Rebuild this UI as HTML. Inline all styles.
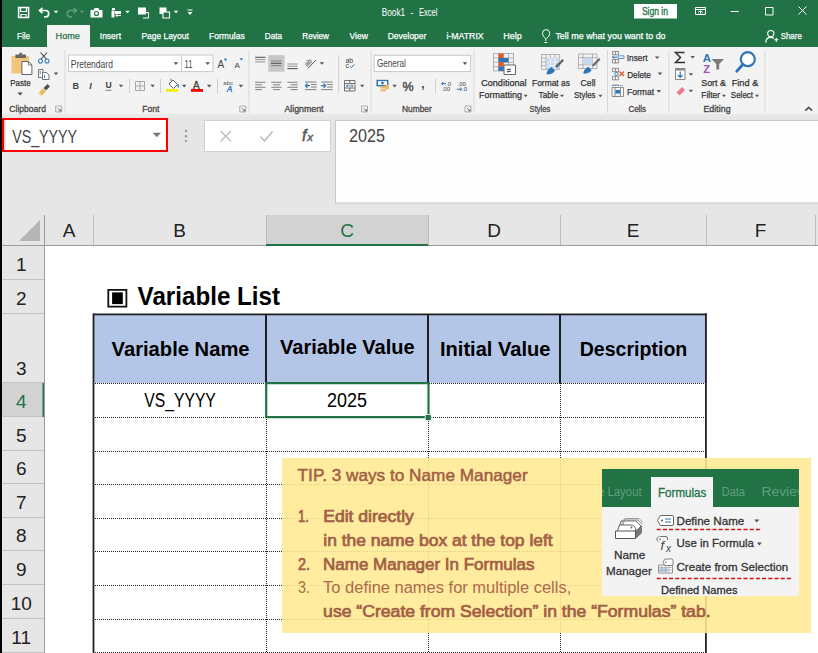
<!DOCTYPE html>
<html><head><meta charset="utf-8">
<style>
*{margin:0;padding:0}
html,body{width:818px;height:653px;overflow:hidden;background:#fff}
svg text{font-family:"Liberation Sans",sans-serif}
</style></head><body>
<svg width="818" height="653" viewBox="0 0 818 653" style="position:absolute;left:0;top:0;display:block">
<rect x="0" y="0" width="818" height="47" fill="#217346"/>
<rect x="47" y="25" width="43" height="22" fill="#f3f3f3"/>
<path d="M18.6,7.6 h10 v10 h-10 Z" fill="none" stroke="#ffffff" stroke-width="1.5"/>
<path d="M20.5,8 v3.5 h6 v-3.5" fill="none" stroke="#ffffff" stroke-width="1.2"/>
<path d="M21,17.5 v-3 h5 v3" fill="none" stroke="#ffffff" stroke-width="1.2"/>
<path d="M42.5,7.8 l-3,2.7 l3,2.7 M39.7,10.5 h5.8 a3.2,3.2 0 0 1 0,6.4 h-1.5" fill="none" stroke="#ffffff" stroke-width="1.6"/>
<path d="M53.75,10.75 L58.25,10.75 L56,13.25 Z" fill="#ffffff" stroke="none" stroke-width="1"/>
<path d="M73.5,7.8 l3,2.7 l-3,2.7 M76.3,10.5 h-5.8 a3.2,3.2 0 0 0 0,6.4 h1.5" fill="none" stroke="#5c9a78" stroke-width="1.6"/>
<path d="M79.75,10.75 L84.25,10.75 L82,13.25 Z" fill="#5c9a78" stroke="none" stroke-width="1"/>
<path d="M90.5,10 h3 l1.2,-2 h3.6 l1.2,2 h3 v7.5 h-12 Z" fill="#ffffff" stroke="none" stroke-width="1"/>
<circle cx="96.5" cy="13.5" r="2.6" fill="#217346"/><circle cx="96.5" cy="13.5" r="1.4" fill="#fff"/>
<path d="M112,8 h3 v2 h-3 Z M111.5,10.5 h3 v7 h-3 Z" fill="#ffffff" stroke="none" stroke-width="1"/>
<path d="M115,11 h6 v3 h-6 Z" fill="#ffffff" stroke="none" stroke-width="1"/>
<path d="M121,15.5 h-5 l1.5,-1.5 M116,15.5 l1.5,1.5" fill="none" stroke="#ffffff" stroke-width="1"/>
<path d="M125.25,10.75 L129.75,10.75 L127.5,13.25 Z" fill="#ffffff" stroke="none" stroke-width="1"/>
<rect x="138" y="7.5" width="8" height="7" fill="#ffffff"/>
<path d="M143,12.5 h5.5 v5.5 h-5.5" fill="none" stroke="#ffffff" stroke-width="1"/>
<rect x="159.5" y="7.5" width="7" height="6.5" fill="#ffffff"/>
<path d="M163,12 h6.5 v6 h-6.5 Z" fill="#217346" stroke="#ffffff" stroke-width="1.1"/>
<path d="M173.75,10.75 L178.25,10.75 L176,13.25 Z" fill="#ffffff" stroke="none" stroke-width="1"/>
<line x1="187.5" y1="10" x2="192.5" y2="10" stroke="#ffffff" stroke-width="1"/>
<path d="M187.5,12.0 L192.5,12.0 L190,15.0 Z" fill="#ffffff" stroke="none" stroke-width="1"/>
<text x="381.70" y="15.60" font-size="10" fill="#ffffff" textLength="23.50" lengthAdjust="spacingAndGlyphs">Book1</text>
<text x="410.60" y="15.60" font-size="10" fill="#ffffff" textLength="2.88" lengthAdjust="spacingAndGlyphs">-</text>
<text x="418.90" y="15.60" font-size="10" fill="#ffffff" textLength="18.60" lengthAdjust="spacingAndGlyphs">Excel</text>
<rect x="634" y="4" width="43" height="14.5" fill="#ffffff"/>
<text x="641.90" y="15.00" font-size="10" fill="#217346" stroke="#217346" stroke-width="0.3" textLength="26.08" lengthAdjust="spacingAndGlyphs">Sign in</text>
<path d="M695.5,7.5 h10 v7 h-10 Z M695.5,9.5 h10" fill="none" stroke="#ffffff" stroke-width="1"/>
<path d="M698,12.5 l2.5,-1.8 l2.5,1.8 M700.5,11 v3" fill="none" stroke="#ffffff" stroke-width="0.9"/>
<line x1="730.8" y1="11.5" x2="738.8" y2="11.5" stroke="#ffffff" stroke-width="1"/>
<path d="M765.5,7.5 h7.5 v7.5 h-7.5 Z" fill="none" stroke="#ffffff" stroke-width="1"/>
<path d="M798.5,6.5 L806.5,14.5 M806.5,6.5 L798.5,14.5" fill="none" stroke="#ffffff" stroke-width="1"/>
<text x="17.10" y="39.10" font-size="9.9" fill="#ffffff" stroke="#ffffff" stroke-width="0.25" textLength="12.91" lengthAdjust="spacingAndGlyphs">File</text>
<text x="55.60" y="39.10" font-size="9.9" fill="#217346" stroke="#217346" stroke-width="0.25" textLength="24.28" lengthAdjust="spacingAndGlyphs">Home</text>
<text x="99.80" y="39.10" font-size="9.9" fill="#ffffff" stroke="#ffffff" stroke-width="0.25" textLength="21.21" lengthAdjust="spacingAndGlyphs">Insert</text>
<text x="141.40" y="39.10" font-size="9.9" fill="#ffffff" stroke="#ffffff" stroke-width="0.25" textLength="47.41" lengthAdjust="spacingAndGlyphs">Page Layout</text>
<text x="209.00" y="39.10" font-size="9.9" fill="#ffffff" stroke="#ffffff" stroke-width="0.25" textLength="35.68" lengthAdjust="spacingAndGlyphs">Formulas</text>
<text x="264.70" y="39.10" font-size="9.9" fill="#ffffff" stroke="#ffffff" stroke-width="0.25" textLength="17.38" lengthAdjust="spacingAndGlyphs">Data</text>
<text x="302.30" y="39.10" font-size="9.9" fill="#ffffff" stroke="#ffffff" stroke-width="0.25" textLength="26.69" lengthAdjust="spacingAndGlyphs">Review</text>
<text x="349.60" y="39.10" font-size="9.9" fill="#ffffff" stroke="#ffffff" stroke-width="0.25" textLength="18.20" lengthAdjust="spacingAndGlyphs">View</text>
<text x="387.70" y="39.10" font-size="9.9" fill="#ffffff" stroke="#ffffff" stroke-width="0.25" textLength="38.69" lengthAdjust="spacingAndGlyphs">Developer</text>
<text x="446.40" y="39.10" font-size="9.9" fill="#ffffff" stroke="#ffffff" stroke-width="0.25" textLength="37.29" lengthAdjust="spacingAndGlyphs">i-MATRIX</text>
<text x="503.30" y="39.10" font-size="9.9" fill="#ffffff" stroke="#ffffff" stroke-width="0.25" textLength="18.52" lengthAdjust="spacingAndGlyphs">Help</text>
<path d="M545.8,41 v-2.5 c-2,-1.3 -3.3,-3 -3.3,-5.3 a3.6,3.6 0 0 1 7.2,0 c0,2.3 -1.3,4 -3.3,5.3" fill="none" stroke="#ffffff" stroke-width="1"/>
<line x1="544.3" y1="42.5" x2="547.3" y2="42.5" stroke="#ffffff" stroke-width="1"/>
<text x="555.40" y="39.10" font-size="9.9" fill="#ffffff" stroke="#ffffff" stroke-width="0.25" textLength="110.20" lengthAdjust="spacingAndGlyphs">Tell me what you want to do</text>
<circle cx="770.8" cy="33.6" r="3.1" fill="none" stroke="#fff" stroke-width="1.1"/>
<path d="M765.8,42.8 c0,-3.6 2.3,-5.4 5,-5.4 c1.2,0 2.2,0.3 3,0.9" fill="none" stroke="#ffffff" stroke-width="1.1"/>
<path d="M774.2,39.8 h4.2 M776.3,37.7 v4.2" fill="none" stroke="#ffffff" stroke-width="1.1"/>
<text x="780.70" y="39.10" font-size="9.9" fill="#ffffff" stroke="#ffffff" stroke-width="0.25" textLength="21.09" lengthAdjust="spacingAndGlyphs">Share</text>
<rect x="0" y="47" width="818" height="67" fill="#f3f3f3"/>
<rect x="0" y="114.3" width="818" height="1.2" fill="#dadada"/>
<line x1="65" y1="50" x2="65" y2="113" stroke="#d9d9d9" stroke-width="1"/>
<line x1="249" y1="50" x2="249" y2="113" stroke="#d9d9d9" stroke-width="1"/>
<line x1="371" y1="50" x2="371" y2="113" stroke="#d9d9d9" stroke-width="1"/>
<line x1="474" y1="50" x2="474" y2="113" stroke="#d9d9d9" stroke-width="1"/>
<line x1="607.5" y1="50" x2="607.5" y2="113" stroke="#d9d9d9" stroke-width="1"/>
<line x1="668.8" y1="50" x2="668.8" y2="113" stroke="#d9d9d9" stroke-width="1"/>
<line x1="765" y1="50" x2="765" y2="113" stroke="#d9d9d9" stroke-width="1"/>
<text x="9.30" y="112.00" font-size="9.2" fill="#444" stroke="#444" stroke-width="0.3" textLength="36.70" lengthAdjust="spacingAndGlyphs">Clipboard</text>
<text x="142.30" y="112.00" font-size="9.2" fill="#444" stroke="#444" stroke-width="0.3" textLength="17.11" lengthAdjust="spacingAndGlyphs">Font</text>
<text x="284.40" y="112.00" font-size="9.2" fill="#444" stroke="#444" stroke-width="0.3" textLength="39.12" lengthAdjust="spacingAndGlyphs">Alignment</text>
<text x="402.00" y="112.00" font-size="9.2" fill="#444" stroke="#444" stroke-width="0.3" textLength="29.82" lengthAdjust="spacingAndGlyphs">Number</text>
<text x="529.60" y="112.00" font-size="9.2" fill="#444" stroke="#444" stroke-width="0.3" textLength="20.79" lengthAdjust="spacingAndGlyphs">Styles</text>
<text x="628.50" y="112.00" font-size="9.2" fill="#444" stroke="#444" stroke-width="0.3" textLength="17.58" lengthAdjust="spacingAndGlyphs">Cells</text>
<text x="703.40" y="112.00" font-size="9.2" fill="#444" stroke="#444" stroke-width="0.3" textLength="27.18" lengthAdjust="spacingAndGlyphs">Editing</text>
<path d="M55.7,106 h6 v6 h-6 Z" fill="none" stroke="#999" stroke-width="0.8"/>
<path d="M57.7,108 l3,3 M60.7,109 v2 h-2" fill="none" stroke="#666" stroke-width="0.8"/>
<path d="M239.8,106 h6 v6 h-6 Z" fill="none" stroke="#999" stroke-width="0.8"/>
<path d="M241.8,108 l3,3 M244.8,109 v2 h-2" fill="none" stroke="#666" stroke-width="0.8"/>
<path d="M361.5,106 h6 v6 h-6 Z" fill="none" stroke="#999" stroke-width="0.8"/>
<path d="M363.5,108 l3,3 M366.5,109 v2 h-2" fill="none" stroke="#666" stroke-width="0.8"/>
<path d="M465,106 h6 v6 h-6 Z" fill="none" stroke="#999" stroke-width="0.8"/>
<path d="M467,108 l3,3 M470,109 v2 h-2" fill="none" stroke="#666" stroke-width="0.8"/>
<path d="M805.3,110.6 l3.4,-3.2 l3.4,3.2" fill="none" stroke="#555" stroke-width="1.8"/>
<text x="10.30" y="85.90" font-size="9.6" fill="#333" stroke="#333" stroke-width="0.25" textLength="20.32" lengthAdjust="spacingAndGlyphs">Paste</text>
<path d="M17.6,92.5 L22.6,92.5 L20.1,95.5 Z" fill="#444" stroke="none" stroke-width="1"/>
<text x="481.30" y="86.00" font-size="9.4" fill="#333" stroke="#333" stroke-width="0.25" textLength="45.19" lengthAdjust="spacingAndGlyphs">Conditional</text>
<text x="479.10" y="97.60" font-size="9.4" fill="#333" stroke="#333" stroke-width="0.25" textLength="42.90" lengthAdjust="spacingAndGlyphs">Formatting</text>
<path d="M523.7,94.8 L527.7,94.8 L525.7,97.2 Z" fill="#555" stroke="none" stroke-width="1"/>
<text x="532.00" y="86.00" font-size="9.4" fill="#333" stroke="#333" stroke-width="0.25" textLength="37.91" lengthAdjust="spacingAndGlyphs">Format as</text>
<text x="538.50" y="97.60" font-size="9.4" fill="#333" stroke="#333" stroke-width="0.25" textLength="19.81" lengthAdjust="spacingAndGlyphs">Table</text>
<path d="M560.0,94.8 L564.0,94.8 L562,97.2 Z" fill="#555" stroke="none" stroke-width="1"/>
<text x="580.60" y="86.00" font-size="9.4" fill="#333" stroke="#333" stroke-width="0.25" textLength="14.88" lengthAdjust="spacingAndGlyphs">Cell</text>
<text x="574.00" y="97.60" font-size="9.4" fill="#333" stroke="#333" stroke-width="0.25" textLength="21.49" lengthAdjust="spacingAndGlyphs">Styles</text>
<path d="M598.4,94.8 L602.4,94.8 L600.4,97.2 Z" fill="#555" stroke="none" stroke-width="1"/>
<text x="626.70" y="60.70" font-size="9.4" fill="#333" stroke="#333" stroke-width="0.25" textLength="20.91" lengthAdjust="spacingAndGlyphs">Insert</text>
<path d="M654.95,56.400000000000006 L659.45,56.400000000000006 L657.2,59.0 Z" fill="#555" stroke="none" stroke-width="1"/>
<text x="627.20" y="77.60" font-size="9.4" fill="#333" stroke="#333" stroke-width="0.25" textLength="23.61" lengthAdjust="spacingAndGlyphs">Delete</text>
<path d="M657.75,72.60000000000001 L662.25,72.60000000000001 L660,75.2 Z" fill="#555" stroke="none" stroke-width="1"/>
<text x="627.00" y="94.60" font-size="9.4" fill="#333" stroke="#333" stroke-width="0.25" textLength="27.02" lengthAdjust="spacingAndGlyphs">Format</text>
<path d="M656.55,90.10000000000001 L661.05,90.10000000000001 L658.8,92.7 Z" fill="#555" stroke="none" stroke-width="1"/>
<text x="701.20" y="85.70" font-size="9.4" fill="#333" stroke="#333" stroke-width="0.25" textLength="24.79" lengthAdjust="spacingAndGlyphs">Sort &amp;</text>
<text x="701.20" y="97.70" font-size="9.4" fill="#333" stroke="#333" stroke-width="0.25" textLength="18.92" lengthAdjust="spacingAndGlyphs">Filter</text>
<path d="M722.0,94.8 L726.0,94.8 L724,97.2 Z" fill="#555" stroke="none" stroke-width="1"/>
<text x="731.70" y="85.70" font-size="9.4" fill="#333" stroke="#333" stroke-width="0.25" textLength="26.60" lengthAdjust="spacingAndGlyphs">Find &amp;</text>
<text x="730.80" y="97.70" font-size="9.4" fill="#333" stroke="#333" stroke-width="0.25" textLength="22.29" lengthAdjust="spacingAndGlyphs">Select</text>
<path d="M755.0,94.8 L759.0,94.8 L757,97.2 Z" fill="#555" stroke="none" stroke-width="1"/>
<rect x="68.5" y="55" width="144.5" height="16.6" fill="#fff" stroke="#c8c8c8" stroke-width="1"/>
<line x1="181.6" y1="55" x2="181.6" y2="71.6" stroke="#c8c8c8" stroke-width="1"/>
<text x="70.80" y="67.50" font-size="10.5" fill="#444" textLength="42.08" lengthAdjust="spacingAndGlyphs">Pretendard</text>
<path d="M173.65,62.300000000000004 L178.15,62.300000000000004 L175.9,64.9 Z" fill="#555" stroke="none" stroke-width="1"/>
<text x="184.50" y="67.50" font-size="10.5" fill="#444" textLength="7.99" lengthAdjust="spacingAndGlyphs">11</text>
<path d="M205.45,62.300000000000004 L209.95,62.300000000000004 L207.7,64.9 Z" fill="#555" stroke="none" stroke-width="1"/>
<rect x="374.2" y="55.3" width="96.4" height="16.3" fill="#fff" stroke="#c8c8c8" stroke-width="1"/>
<text x="377.00" y="66.70" font-size="10.5" fill="#444" textLength="28.78" lengthAdjust="spacingAndGlyphs">General</text>
<path d="M462.75,62.300000000000004 L467.25,62.300000000000004 L465,64.9 Z" fill="#555" stroke="none" stroke-width="1"/>
<path d="M11.5,56 h17.4 v17.5 h-17.4 Z" fill="#f0c77a" stroke="none" stroke-width="1"/>
<path d="M15.4,54.5 h10.5 v3.5 h-10.5 Z" fill="#666" stroke="none" stroke-width="1"/>
<path d="M19,54.5 a1.7,1.7 0 0 1 3.4,0 Z" fill="#666" stroke="none" stroke-width="1"/>
<rect x="19.7" y="52.8" width="2" height="2" fill="#666"/>
<path d="M21.9,61.5 h6.5 l3.5,3.5 v9.5 h-10 Z" fill="#fff" stroke="#555" stroke-width="0.9"/>
<path d="M28.4,61.5 v3.5 h3.5" fill="none" stroke="#555" stroke-width="0.8"/>
<path d="M40.5,52.5 L46.8,59.5 M47,52.5 L40.7,59.5" fill="none" stroke="#444" stroke-width="1.1"/>
<circle cx="40.5" cy="61" r="2" fill="none" stroke="#3c7fc4" stroke-width="1.1"/>
<circle cx="47" cy="61" r="2" fill="none" stroke="#3c7fc4" stroke-width="1.1"/>
<path d="M38.5,69.5 h4.5 v8 h-4.5 Z" fill="#fff" stroke="#666" stroke-width="0.9"/>
<path d="M42.5,72.5 h4 l2.5,2.5 v4.5 h-6.5 Z" fill="#fff" stroke="#666" stroke-width="0.9"/>
<rect x="44" y="75" width="1" height="3" fill="#3c7fc4"/>
<rect x="39.7" y="71" width="1" height="3" fill="#3c7fc4"/>
<path d="M53.75,72.60000000000001 L58.25,72.60000000000001 L56,75.2 Z" fill="#555" stroke="none" stroke-width="1"/>
<path d="M39,92.5 l4,-4 l3,3 l-4,4 Z" fill="#ecb95c" stroke="none" stroke-width="1"/>
<path d="M43.5,88 l4,-4 l2.5,2.5 l-4,4 Z" fill="#555" stroke="none" stroke-width="1"/>
<path d="M38.2,93.2 l3.3,3 l-1,-2 Z" fill="#ecb95c" stroke="none" stroke-width="1"/>
<text x="72.5" y="88.7" font-size="9" font-weight="bold" fill="#444">B</text>
<text x="89.2" y="88.7" font-size="9" font-style="italic" font-family="Liberation Serif" font-weight="bold" fill="#444">I</text>
<text x="105.4" y="88.2" font-size="8.6" font-weight="bold" fill="#444">U</text>
<line x1="105.4" y1="90.3" x2="111.5" y2="90.3" stroke="#666" stroke-width="0.8"/>
<path d="M118.75,84.7 L123.25,84.7 L121,87.3 Z" fill="#555" stroke="none" stroke-width="1"/>
<line x1="129.5" y1="79" x2="129.5" y2="93.5" stroke="#cfcfcf" stroke-width="1"/>
<path d="M135.5,81.5 h9 v9 h-9 Z M140,81.5 v9 M135.5,86 h9" fill="none" stroke="#a8a8a8" stroke-width="1"/>
<path d="M150.35,84.7 L154.85,84.7 L152.6,87.3 Z" fill="#555" stroke="none" stroke-width="1"/>
<line x1="160.5" y1="79" x2="160.5" y2="93.5" stroke="#cfcfcf" stroke-width="1"/>
<path d="M169,84 l4,-4 l4.5,4.5 l-4,4 Z" fill="#fff" stroke="#555" stroke-width="0.9"/>
<path d="M171,81 v-2.5" fill="none" stroke="#555" stroke-width="0.8"/>
<path d="M177.5,84.5 c1,1 1.2,2 0.5,3" fill="none" stroke="#2e75b6" stroke-width="1.3"/>
<rect x="166" y="89" width="12" height="2.8" fill="#f2f000"/>
<path d="M181.95,84.8 L186.45,84.8 L184.2,87.39999999999999 Z" fill="#555" stroke="none" stroke-width="1"/>
<text x="193.1" y="88.5" font-size="10" fill="#444" stroke="#444" stroke-width="0.35">A</text>
<rect x="191" y="89" width="12" height="2.8" fill="#f00"/>
<path d="M206.95,84.8 L211.45,84.8 L209.2,87.39999999999999 Z" fill="#555" stroke="none" stroke-width="1"/>
<line x1="217.5" y1="79" x2="217.5" y2="93.5" stroke="#cfcfcf" stroke-width="1"/>
<text x="223.3" y="85.2" font-size="6" fill="#555">abc</text>
<text x="226.4" y="91.8" font-size="8.5" font-weight="bold" font-style="italic" fill="#2e75b6">A</text>
<path d="M238.65,84.8 L243.15,84.8 L240.9,87.39999999999999 Z" fill="#555" stroke="none" stroke-width="1"/>
<text x="217.6" y="67.6" font-size="10" fill="#444">A</text>
<path d="M223.9,58.5 L227.1,58.5 L225.5,60.5 Z" fill="#2e75b6" stroke="none" stroke-width="1"/>
<path d="M224,60.5 l1.5,-1.5 l1.5,1.5 Z" fill="#2e75b6" stroke="none" stroke-width="1"/>
<text x="234.5" y="67.6" font-size="8" fill="#444">A</text>
<path d="M239.65,58.199999999999996 L243.15,58.199999999999996 L241.4,60.4 Z" fill="#2e75b6" stroke="none" stroke-width="1"/>
<line x1="255.1" y1="57.3" x2="265.4" y2="57.3" stroke="#555" stroke-width="1.1"/>
<line x1="255.1" y1="59.6" x2="265.4" y2="59.6" stroke="#9a9a9a" stroke-width="1.1"/>
<line x1="255.1" y1="61.9" x2="265.4" y2="61.9" stroke="#9a9a9a" stroke-width="1.1"/>
<line x1="287.4" y1="64" x2="297.7" y2="64" stroke="#9a9a9a" stroke-width="1.1"/>
<line x1="287.4" y1="66.3" x2="297.7" y2="66.3" stroke="#9a9a9a" stroke-width="1.1"/>
<line x1="287.4" y1="68.6" x2="297.7" y2="68.6" stroke="#555" stroke-width="1.1"/>
<rect x="268.3" y="55.1" width="16.2" height="16.6" fill="#c6c6c6"/>
<line x1="271" y1="61" x2="281.5" y2="61" stroke="#8a8a8a" stroke-width="1.1"/>
<line x1="271" y1="63.3" x2="281.5" y2="63.3" stroke="#555" stroke-width="1.1"/>
<line x1="271" y1="65.6" x2="281.5" y2="65.6" stroke="#8a8a8a" stroke-width="1.1"/>
<text x="0" y="0" font-size="7" fill="#444" transform="translate(307,67) rotate(-45)">ab</text>
<line x1="308" y1="68.3" x2="316" y2="60" stroke="#444" stroke-width="0.9"/>
<path d="M319.65,62.2 L324.15,62.2 L321.9,64.8 Z" fill="#555" stroke="none" stroke-width="1"/>
<line x1="338.7" y1="55" x2="338.7" y2="93" stroke="#d0d0d0" stroke-width="1"/>
<text x="345.4" y="62.9" font-size="7" fill="#444">ab</text>
<text x="345.4" y="68.3" font-size="7" fill="#444">c</text>
<path d="M350,66 l1.5,1.5 l3,-3" fill="none" stroke="#2e75b6" stroke-width="1"/>
<line x1="255.1" y1="82.3" x2="265.4" y2="82.3" stroke="#8a8a8a" stroke-width="1.1"/>
<line x1="255.1" y1="84.8" x2="262.1" y2="84.8" stroke="#8a8a8a" stroke-width="1.1"/>
<line x1="255.1" y1="87.3" x2="265.4" y2="87.3" stroke="#8a8a8a" stroke-width="1.1"/>
<line x1="255.1" y1="89.6" x2="262.1" y2="89.6" stroke="#8a8a8a" stroke-width="1.1"/>
<line x1="271.3" y1="82.3" x2="281.6" y2="82.3" stroke="#8a8a8a" stroke-width="1.1"/>
<line x1="272.95" y1="84.8" x2="279.95" y2="84.8" stroke="#8a8a8a" stroke-width="1.1"/>
<line x1="271.3" y1="87.3" x2="281.6" y2="87.3" stroke="#8a8a8a" stroke-width="1.1"/>
<line x1="272.95" y1="89.6" x2="279.95" y2="89.6" stroke="#8a8a8a" stroke-width="1.1"/>
<line x1="287.4" y1="82.3" x2="297.7" y2="82.3" stroke="#8a8a8a" stroke-width="1.1"/>
<line x1="290.7" y1="84.8" x2="297.7" y2="84.8" stroke="#8a8a8a" stroke-width="1.1"/>
<line x1="287.4" y1="87.3" x2="297.7" y2="87.3" stroke="#8a8a8a" stroke-width="1.1"/>
<line x1="290.7" y1="89.6" x2="297.7" y2="89.6" stroke="#8a8a8a" stroke-width="1.1"/>
<line x1="305" y1="82" x2="316.7" y2="82" stroke="#8a8a8a" stroke-width="1.1"/>
<line x1="311" y1="84.5" x2="316.7" y2="84.5" stroke="#8a8a8a" stroke-width="1.1"/>
<line x1="311" y1="87" x2="316.7" y2="87" stroke="#8a8a8a" stroke-width="1.1"/>
<line x1="305" y1="89.6" x2="316.7" y2="89.6" stroke="#8a8a8a" stroke-width="1.1"/>
<path d="M310,85.7 h-4.5 M307.5,83.5 l-2,2.2 l2,2.2" fill="none" stroke="#2e75b6" stroke-width="1.2"/>
<line x1="321.1" y1="82" x2="332.8" y2="82" stroke="#8a8a8a" stroke-width="1.1"/>
<line x1="327.1" y1="84.5" x2="332.8" y2="84.5" stroke="#8a8a8a" stroke-width="1.1"/>
<line x1="327.1" y1="87" x2="332.8" y2="87" stroke="#8a8a8a" stroke-width="1.1"/>
<line x1="321.1" y1="89.6" x2="332.8" y2="89.6" stroke="#8a8a8a" stroke-width="1.1"/>
<path d="M321.1,85.7 h4.5 M323.6,83.5 l2,2.2 l-2,2.2" fill="none" stroke="#2e75b6" stroke-width="1.2"/>
<path d="M344.5,80.5 h10.5 v10.5 h-10.5 Z M344.5,83.5 h10.5 M344.5,88 h10.5 M349.75,80.5 v3 M349.75,88 v3" fill="none" stroke="#666" stroke-width="0.9"/>
<path d="M346.5,85.8 h6.5 M348,84.5 l-1.5,1.3 l1.5,1.3 M351.5,84.5 l1.5,1.3 l-1.5,1.3" fill="none" stroke="#2e75b6" stroke-width="0.8"/>
<path d="M359.95,84.7 L364.45,84.7 L362.2,87.3 Z" fill="#555" stroke="none" stroke-width="1"/>
<path d="M376.5,79.8 h12 v6.6 h-12 Z" fill="#2e75b6" stroke="none" stroke-width="1"/>
<path d="M378,81.2 h9 v3.8 h-9 Z" fill="#fff" stroke="none" stroke-width="1"/>
<circle cx="382.5" cy="83.1" r="1.4" fill="#2e75b6"/>
<rect x="380.5" y="86.5" width="5.5" height="2" fill="#f0b85a"/>
<rect x="380.5" y="89.3" width="5.5" height="2" fill="#f0b85a"/>
<rect x="385.5" y="84.8" width="3.5" height="4.5" fill="#f0b85a"/>
<path d="M392.35,84.8 L396.85,84.8 L394.6,87.39999999999999 Z" fill="#555" stroke="none" stroke-width="1"/>
<text x="402.6" y="90.8" font-size="12.5" fill="#444" stroke="#444" stroke-width="0.4">%</text>
<text x="421.3" y="87.5" font-size="12" font-weight="bold" fill="#444">,</text>
<line x1="435.5" y1="79" x2="435.5" y2="93" stroke="#d0d0d0" stroke-width="1"/>
<text x="446" y="85.8" font-size="6" fill="#444">.0</text>
<text x="441.8" y="91.4" font-size="6" fill="#444">.00</text>
<path d="M446,83.6 h-4.5 M443.2,81.9 l-1.7,1.7 l1.7,1.7" fill="none" stroke="#2e75b6" stroke-width="1"/>
<text x="457.5" y="85.8" font-size="6" fill="#444">.00</text>
<text x="462" y="91.4" font-size="6" fill="#444">.0</text>
<path d="M456.8,89.2 h5 M460.1,87.5 l1.7,1.7 l-1.7,1.7" fill="none" stroke="#2e75b6" stroke-width="1"/>
<path d="M493.5,53.5 h20 v17.5 h-20 Z M493.5,58 h20 M493.5,62.3 h20 M493.5,66.6 h20 M498.5,53.5 v17.5 M503.5,53.5 v17.5 M508.5,53.5 v17.5" fill="none" stroke="#aaa" stroke-width="0.9"/>
<rect x="498.5" y="53.5" width="5" height="4.5" fill="#e2572b"/>
<rect x="498.5" y="58" width="10" height="4.3" fill="#2e75b6"/>
<rect x="498.5" y="62.3" width="5" height="4.3" fill="#e2572b"/>
<rect x="498.5" y="66.6" width="5" height="4.4" fill="#2e75b6"/>
<path d="M504,65 h11.5 v9.5 h-11.5 Z" fill="#fff" stroke="#555" stroke-width="0.9"/>
<text x="506.8" y="72.5" font-size="8" fill="#333">&#8800;</text>
<path d="M541.5,54.5 h18 v15 h-18 Z M541.5,58.2 h18 M541.5,62 h18 M541.5,65.7 h18 M546,54.5 v15 M550.5,54.5 v15 M555,54.5 v15" fill="none" stroke="#aaa" stroke-width="0.9"/>
<rect x="546.5" y="58.7" width="13" height="10.5" fill="#c5d9f1"/>
<path d="M546.5,58.2 h13 M546.5,62 h13 M546.5,65.7 h13 M550.5,58.5 v11 M555,58.5 v11" fill="none" stroke="#fff" stroke-width="0.7"/>
<path d="M555,66 l7.5,-7 l1.5,1.5 l-7,7.5 Z" fill="#666" stroke="none" stroke-width="1"/>
<path d="M546.5,74.5 c0,-3 2,-6 5,-7.5 l3.5,3.5 c-1.5,3 -5,4 -8.5,4 Z" fill="#2e75b6" stroke="none" stroke-width="1"/>
<path d="M578.5,54 h18.5 v14.5 h-18.5 Z M578.5,57.7 h18.5 M578.5,64.8 h18.5 M583,54 v14.5 M592.5,54 v14.5" fill="none" stroke="#aaa" stroke-width="0.9"/>
<rect x="583.5" y="58.2" width="9" height="6.2" fill="#c5d9f1"/>
<path d="M592,65 l7,-7 l1.5,1.5 l-7,7 Z" fill="#666" stroke="none" stroke-width="1"/>
<path d="M583.3,73.7 c0,-3 2,-5.5 5,-7 l3.3,3.3 c-1.5,3 -5,3.7 -8.3,3.7 Z" fill="#2e75b6" stroke="none" stroke-width="1"/>
<path d="M612.5,51.5 h6 v3.3 h-6 Z M612.5,59.5 h6 v3.5 h-6 Z M615.5,51.5 v3.3 M615.5,59.5 v3.5" fill="none" stroke="#777" stroke-width="0.8"/>
<path d="M612.5,68.3 h6 v3.3 h-6 Z M612.5,76.3 h6 v3.5 h-6 Z M615.5,68.3 v3.3 M615.5,76.3 v3.5" fill="none" stroke="#777" stroke-width="0.8"/>
<path d="M612.5,85 h6 v3.3 h-6 Z M612.5,93 h6 v3.5 h-6 Z M615.5,85 v3.3 M615.5,93 v3.5" fill="none" stroke="#777" stroke-width="0.8"/>
<path d="M618,55.8 h6 v2.7 h-6 Z" fill="none" stroke="#3c7fc4" stroke-width="0.8"/>
<path d="M617,57.2 h-4.5 M614,55.7 l-1.5,1.5 l1.5,1.5" fill="none" stroke="#2e75b6" stroke-width="1"/>
<path d="M615,72.5 h3 v2.7 h-3 Z" fill="none" stroke="#3c7fc4" stroke-width="0.8"/>
<path d="M619.5,71.5 l4.5,4.5 M624,71.5 l-4.5,4.5" fill="none" stroke="#e2572b" stroke-width="1.3"/>
<rect x="611.5" y="85.5" width="12.5" height="11" fill="#f3f3f3"/>
<path d="M612,87.5 h11.5 v9 h-11.5 Z M615,87.5 v9 M620.5,87.5 v9" fill="none" stroke="#777" stroke-width="0.8"/>
<path d="M612.5,85.5 h10.5" fill="none" stroke="#2e75b6" stroke-width="0.9" stroke-dasharray="1.5 1"/>
<rect x="615.5" y="90" width="4.5" height="3.5" fill="#2e75b6"/>
<path d="M684.5,52.5 h-9 l5,5 l-5,5 h9.5" fill="none" stroke="#333" stroke-width="1.5"/>
<path d="M690.35,56.0 L694.85,56.0 L692.6,58.599999999999994 Z" fill="#555" stroke="none" stroke-width="1"/>
<path d="M675.5,68.5 h9.5 v11 h-9.5 Z" fill="#fff" stroke="#777" stroke-width="0.9"/>
<rect x="675.5" y="68.5" width="9.5" height="2" fill="#888"/>
<path d="M680.2,71.5 v6 M677.8,75 l2.4,2.5 l2.4,-2.5" fill="none" stroke="#2e75b6" stroke-width="1.2"/>
<path d="M688.65,73.2 L693.15,73.2 L690.9,75.8 Z" fill="#555" stroke="none" stroke-width="1"/>
<path d="M676.5,92.5 l5.5,-5.5 l3,3 l-5.5,5.5 Z" fill="#e87d91" stroke="none" stroke-width="1"/>
<path d="M688.65,89.7 L693.15,89.7 L690.9,92.3 Z" fill="#555" stroke="none" stroke-width="1"/>
<text x="702.8" y="62.3" font-size="11.5" font-weight="bold" fill="#2e75b6">A</text>
<text x="703.3" y="72.7" font-size="11" font-weight="bold" fill="#9b4fc0">Z</text>
<path d="M711.5,59 h12.5 l-4.8,5 v5.5 h-2.9 v-5.5 Z" fill="#7a7a7a" stroke="none" stroke-width="1"/>
<circle cx="747.8" cy="59.2" r="7" fill="#fff" stroke="#2e75b6" stroke-width="2.2"/>
<line x1="742.8" y1="64.5" x2="736.8" y2="71.2" stroke="#2e75b6" stroke-width="2.8" stroke-linecap="round"/>
<rect x="0" y="116" width="818" height="130" fill="#e6e6e6"/>
<rect x="2" y="118" width="166" height="34" fill="#fff"/>
<rect x="4" y="120" width="1.5" height="30" fill="#d0d0d0"/>
<path d="M3,119 h164 v32 h-164 Z" fill="none" stroke="#ff0000" stroke-width="2"/>
<text x="12.20" y="143.00" font-size="18.5" fill="#444" textLength="64.78" lengthAdjust="spacingAndGlyphs">VS_YYYY</text>
<path d="M152.65,132.65 L160.95000000000002,132.65 L156.8,137.35 Z" fill="#777" stroke="none" stroke-width="1"/>
<circle cx="186" cy="131" r="1.2" fill="#999"/>
<circle cx="186" cy="136.2" r="1.2" fill="#999"/>
<circle cx="186" cy="141.1" r="1.2" fill="#999"/>
<rect x="204.5" y="120.5" width="126" height="31" fill="#fff" stroke="#d2d2d2" stroke-width="1"/>
<path d="M220.5,131 l10.5,10.5 M231,131 l-10.5,10.5" fill="none" stroke="#bdbdbd" stroke-width="1.4"/>
<path d="M260.5,136.5 l4,4.5 l8,-9.5" fill="none" stroke="#bdbdbd" stroke-width="1.6"/>
<text x="302" y="140.5" font-size="16" font-style="italic" font-family="Liberation Serif" fill="#555" stroke="#555" stroke-width="0.5">f</text>
<text x="307.3" y="140.8" font-size="11.5" font-style="italic" font-family="Liberation Serif" fill="#555" stroke="#555" stroke-width="0.4">x</text>
<rect x="335.5" y="120.5" width="490" height="82.5" fill="#fdfdfd" stroke="#c8c8c8" stroke-width="1"/>
<text x="349.10" y="142.40" font-size="18.5" fill="#444" textLength="35.89" lengthAdjust="spacingAndGlyphs">2025</text>
<rect x="0" y="245" width="45" height="408" fill="#e6e6e6"/>
<rect x="266" y="215" width="162" height="30" fill="#d2d2d2"/>
<rect x="2" y="383" width="42" height="34" fill="#d2d2d2"/>
<path d="M40,220 L40,241 L19,241 Z" fill="#b5b5b5" stroke="none" stroke-width="1"/>
<line x1="2" y1="279.5" x2="44" y2="279.5" stroke="#c3c3c3" stroke-width="1"/>
<line x1="2" y1="313.5" x2="44" y2="313.5" stroke="#c3c3c3" stroke-width="1"/>
<line x1="2" y1="382.5" x2="44" y2="382.5" stroke="#c3c3c3" stroke-width="1"/>
<line x1="2" y1="416.5" x2="44" y2="416.5" stroke="#c3c3c3" stroke-width="1"/>
<line x1="2" y1="450.5" x2="44" y2="450.5" stroke="#c3c3c3" stroke-width="1"/>
<line x1="2" y1="483.5" x2="44" y2="483.5" stroke="#c3c3c3" stroke-width="1"/>
<line x1="2" y1="517.5" x2="44" y2="517.5" stroke="#c3c3c3" stroke-width="1"/>
<line x1="2" y1="550.5" x2="44" y2="550.5" stroke="#c3c3c3" stroke-width="1"/>
<line x1="2" y1="584.5" x2="44" y2="584.5" stroke="#c3c3c3" stroke-width="1"/>
<line x1="2" y1="618.5" x2="44" y2="618.5" stroke="#c3c3c3" stroke-width="1"/>
<line x1="2" y1="652.5" x2="44" y2="652.5" stroke="#c3c3c3" stroke-width="1"/>
<text x="21.2" y="270.5" font-size="19" fill="#222" text-anchor="middle">1</text>
<text x="21.2" y="304.5" font-size="19" fill="#222" text-anchor="middle">2</text>
<text x="21.2" y="374.5" font-size="19" fill="#222" text-anchor="middle">3</text>
<text x="21.2" y="407.5" font-size="19" fill="#217346" text-anchor="middle">4</text>
<text x="21.2" y="441.5" font-size="19" fill="#222" text-anchor="middle">5</text>
<text x="21.2" y="474.5" font-size="19" fill="#222" text-anchor="middle">6</text>
<text x="21.2" y="508.5" font-size="19" fill="#222" text-anchor="middle">7</text>
<text x="21.2" y="541.5" font-size="19" fill="#222" text-anchor="middle">8</text>
<text x="21.2" y="575.5" font-size="19" fill="#222" text-anchor="middle">9</text>
<text x="21.2" y="609.5" font-size="19" fill="#222" text-anchor="middle">10</text>
<text x="21.2" y="643.5" font-size="19" fill="#222" text-anchor="middle">11</text>
<rect x="42.5" y="383" width="2" height="34" fill="#217346"/>
<line x1="93.5" y1="215" x2="93.5" y2="245" stroke="#bdbdbd" stroke-width="1"/>
<line x1="266.5" y1="215" x2="266.5" y2="245" stroke="#bdbdbd" stroke-width="1"/>
<line x1="428.5" y1="215" x2="428.5" y2="245" stroke="#bdbdbd" stroke-width="1"/>
<line x1="560.5" y1="215" x2="560.5" y2="245" stroke="#bdbdbd" stroke-width="1"/>
<line x1="706.5" y1="215" x2="706.5" y2="245" stroke="#bdbdbd" stroke-width="1"/>
<line x1="815.5" y1="215" x2="815.5" y2="245" stroke="#bdbdbd" stroke-width="1"/>
<text x="69.0" y="237" font-size="19" fill="#222" text-anchor="middle">A</text>
<text x="179.5" y="237" font-size="19" fill="#222" text-anchor="middle">B</text>
<text x="347.0" y="237" font-size="19" fill="#217346" text-anchor="middle">C</text>
<text x="494.0" y="237" font-size="19" fill="#222" text-anchor="middle">D</text>
<text x="633.0" y="237" font-size="19" fill="#222" text-anchor="middle">E</text>
<text x="760.5" y="237" font-size="19" fill="#222" text-anchor="middle">F</text>
<line x1="0" y1="245.5" x2="818" y2="245.5" stroke="#9c9c9c" stroke-width="1"/>
<line x1="44.5" y1="215" x2="44.5" y2="653" stroke="#9c9c9c" stroke-width="1"/>
<rect x="266" y="244" width="162" height="2" fill="#217346"/>
<rect x="45" y="246" width="773" height="407" fill="#fff"/>
<path d="M108.3,289.8 h18.1 v16.9 h-18.1 Z" fill="#fff" stroke="#111" stroke-width="1.8"/>
<rect x="112.1" y="292.4" width="10.7" height="11.7" fill="#000"/>
<text x="137.60" y="305.30" font-size="25" fill="#000" font-weight="bold" textLength="142.44" lengthAdjust="spacingAndGlyphs">Variable List</text>
<rect x="93" y="314" width="614" height="69" fill="#b4c6e7"/>
<line x1="93" y1="383.5" x2="706" y2="383.5" stroke="#222" stroke-width="1" stroke-dasharray="1 1"/>
<line x1="93" y1="417.5" x2="706" y2="417.5" stroke="#222" stroke-width="1" stroke-dasharray="1 1"/>
<line x1="93" y1="451.5" x2="706" y2="451.5" stroke="#222" stroke-width="1" stroke-dasharray="1 1"/>
<line x1="93" y1="484.5" x2="706" y2="484.5" stroke="#222" stroke-width="1" stroke-dasharray="1 1"/>
<line x1="93" y1="518.5" x2="706" y2="518.5" stroke="#222" stroke-width="1" stroke-dasharray="1 1"/>
<line x1="93" y1="551.5" x2="706" y2="551.5" stroke="#222" stroke-width="1" stroke-dasharray="1 1"/>
<line x1="93" y1="585.5" x2="706" y2="585.5" stroke="#222" stroke-width="1" stroke-dasharray="1 1"/>
<line x1="93" y1="619.5" x2="706" y2="619.5" stroke="#222" stroke-width="1" stroke-dasharray="1 1"/>
<line x1="93" y1="652.5" x2="706" y2="652.5" stroke="#222" stroke-width="1" stroke-dasharray="1 1"/>
<line x1="266.5" y1="383" x2="266.5" y2="653" stroke="#222" stroke-width="1" stroke-dasharray="1 1"/>
<line x1="428.5" y1="383" x2="428.5" y2="653" stroke="#222" stroke-width="1" stroke-dasharray="1 1"/>
<line x1="560.5" y1="383" x2="560.5" y2="653" stroke="#222" stroke-width="1" stroke-dasharray="1 1"/>
<rect x="93" y="313.5" width="614" height="1.8" fill="#222"/>
<rect x="265" y="314" width="2" height="69" fill="#1e1e1e"/>
<rect x="427" y="314" width="2" height="69" fill="#1e1e1e"/>
<rect x="559" y="314" width="2" height="69" fill="#1e1e1e"/>
<rect x="92.6" y="313.5" width="1.8" height="339.5" fill="#222"/>
<rect x="705" y="313.5" width="1.8" height="339.5" fill="#222"/>
<text x="111.60" y="356.20" font-size="20" fill="#000" font-weight="bold" textLength="137.95" lengthAdjust="spacingAndGlyphs">Variable Name</text>
<text x="280.00" y="354.20" font-size="20" fill="#000" font-weight="bold" textLength="134.63" lengthAdjust="spacingAndGlyphs">Variable Value</text>
<text x="440.00" y="356.20" font-size="20" fill="#000" font-weight="bold" textLength="110.44" lengthAdjust="spacingAndGlyphs">Initial Value</text>
<text x="579.70" y="356.20" font-size="20" fill="#000" font-weight="bold" textLength="107.62" lengthAdjust="spacingAndGlyphs">Description</text>
<text x="144.20" y="407.00" font-size="20" fill="#000" textLength="71.67" lengthAdjust="spacingAndGlyphs">VS_YYYY</text>
<text x="327.10" y="407.20" font-size="20" fill="#000" textLength="39.99" lengthAdjust="spacingAndGlyphs">2025</text>
<path d="M266.2,383.2 h162.3 v34 h-162.3 Z" fill="none" stroke="#217346" stroke-width="2.2"/>
<rect x="425.2" y="414.4" width="6" height="6" fill="#217346" stroke="#fff" stroke-width="0.8"/>
<rect x="282" y="458" width="529" height="175" fill="rgba(255,233,146,0.88)"/>
<text x="297.60" y="481.30" font-size="16.5" fill="#a35f45" stroke="#a35f45" stroke-width="0.5" textLength="230.03" lengthAdjust="spacingAndGlyphs">TIP. 3 ways to Name Manager</text>
<text x="298.00" y="522.30" font-size="16" fill="#a35f45" stroke="#a35f45" stroke-width="0.7" textLength="10.99" lengthAdjust="spacingAndGlyphs">1.</text>
<text x="323.30" y="522.30" font-size="16" fill="#a35f45" stroke="#a35f45" stroke-width="0.7" textLength="90.58" lengthAdjust="spacingAndGlyphs">Edit directly</text>
<text x="323.30" y="545.80" font-size="16" fill="#a35f45" stroke="#a35f45" stroke-width="0.7" textLength="229.31" lengthAdjust="spacingAndGlyphs">in the name box at the top left</text>
<text x="298.00" y="570.00" font-size="16" fill="#a35f45" stroke="#a35f45" stroke-width="0.7" textLength="11.99" lengthAdjust="spacingAndGlyphs">2.</text>
<text x="323.10" y="570.00" font-size="16" fill="#a35f45" stroke="#a35f45" stroke-width="0.7" textLength="211.39" lengthAdjust="spacingAndGlyphs">Name Manager In Formulas</text>
<text x="298.00" y="593.10" font-size="16" fill="#ad6a4c" textLength="11.99" lengthAdjust="spacingAndGlyphs">3.</text>
<text x="323.10" y="593.10" font-size="16" fill="#ad6a4c" textLength="248.16" lengthAdjust="spacingAndGlyphs">To define names for multiple cells,</text>
<text x="323.10" y="617.00" font-size="16" fill="#a35f45" stroke="#a35f45" stroke-width="0.7" textLength="387.48" lengthAdjust="spacingAndGlyphs">use “Create from Selection” in the “Formulas” tab.</text>
<rect x="602" y="469" width="197" height="127" fill="#f3f3f3"/>
<rect x="602" y="469" width="197" height="38" fill="#217346"/>
<rect x="651" y="477" width="62" height="30" fill="#f3f3f3"/>
<svg x="602" y="469" width="197" height="127" overflow="hidden">
<text x="-4.00" y="27.00" font-size="12" fill="#5f9f7a" textLength="43.62" lengthAdjust="spacingAndGlyphs">e Layout</text>
<text x="56.00" y="27.50" font-size="12" fill="#217346" stroke="#217346" stroke-width="0.3" textLength="48.37" lengthAdjust="spacingAndGlyphs">Formulas</text>
<text x="119.80" y="27.00" font-size="12" fill="#5f9f7a" textLength="23.17" lengthAdjust="spacingAndGlyphs">Data</text>
<text x="159.40" y="27.00" font-size="12" fill="#5f9f7a" textLength="45.58" lengthAdjust="spacingAndGlyphs">Review</text>
</svg>
<text x="676.50" y="525.40" font-size="11.8" fill="#333" stroke="#333" stroke-width="0.3" textLength="67.81" lengthAdjust="spacingAndGlyphs">Define Name</text>
<text x="676.50" y="547.40" font-size="11.8" fill="#333" stroke="#333" stroke-width="0.3" textLength="77.44" lengthAdjust="spacingAndGlyphs">Use in Formula</text>
<text x="676.50" y="570.60" font-size="11.8" fill="#333" stroke="#333" stroke-width="0.3" textLength="111.81" lengthAdjust="spacingAndGlyphs">Create from Selection</text>
<text x="613.90" y="559.30" font-size="11.8" fill="#333" stroke="#333" stroke-width="0.3" textLength="31.37" lengthAdjust="spacingAndGlyphs">Name</text>
<text x="606.00" y="575.00" font-size="11.8" fill="#333" stroke="#333" stroke-width="0.3" textLength="45.82" lengthAdjust="spacingAndGlyphs">Manager</text>
<text x="661.00" y="594.00" font-size="10.5" fill="#333" stroke="#333" stroke-width="0.3" textLength="76.43" lengthAdjust="spacingAndGlyphs">Defined Names</text>
<path d="M754.3,519.5 L759.3,519.5 L756.8,522.5 Z" fill="#555" stroke="none" stroke-width="1"/>
<path d="M756.9,542.5 L761.9,542.5 L759.4,545.5 Z" fill="#555" stroke="none" stroke-width="1"/>
<line x1="656.7" y1="529.5" x2="762" y2="529.5" stroke="#d0101a" stroke-width="1.6" stroke-dasharray="4 2.2"/>
<line x1="656.7" y1="578.5" x2="793" y2="578.5" stroke="#d0101a" stroke-width="1.6" stroke-dasharray="4 2.2"/>
<path d="M618.5,529.5 l2.5,-8.5 h15 l5,5 l-2,3.5" fill="#fff" stroke="#666" stroke-width="0.9"/>
<path d="M620.5,528.5 l2.5,-8.5 h15 l4.5,4.5" fill="none" stroke="#777" stroke-width="0.8"/>
<path d="M622.5,527 l2.5,-8.5 h14 l4,4" fill="none" stroke="#888" stroke-width="0.8"/>
<path d="M617.5,531 l2,-6 h13 l3,3 v3" fill="#fff" stroke="#555" stroke-width="0.9"/>
<circle cx="631.5" cy="527.5" r="0.9" fill="#555"/>
<path d="M635.5,531 l6,-5 v7 l-6,5.5 Z" fill="#777" stroke="#555" stroke-width="0.6"/>
<path d="M615.5,531 h20 v7.5 h-20 Z" fill="#fff" stroke="#555" stroke-width="1"/>
<path d="M660.5,515.5 h11.5 a1.5,1.5 0 0 1 1.5,1.5 v7 a1.5,1.5 0 0 1 -1.5,1.5 h-11.5 l-3,-5 Z" fill="#fff" stroke="#555" stroke-width="0.9"/>
<circle cx="662" cy="520.5" r="1" fill="#555"/>
<line x1="665" y1="519" x2="671" y2="519" stroke="#2e75b6" stroke-width="1"/>
<line x1="665" y1="522" x2="671" y2="522" stroke="#2e75b6" stroke-width="1"/>
<path d="M659.5,536.5 h6.5 a1.5,1.5 0 0 1 1.5,1.5 v2 M658,541.5 l-1.5,-2.5 l2,-2.5" fill="none" stroke="#666" stroke-width="0.9"/>
<circle cx="660" cy="539.2" r="0.8" fill="#555"/>
<text x="660.5" y="549.5" font-size="13" font-style="italic" font-family="Liberation Serif" fill="#444">f</text>
<text x="666" y="551.5" font-size="10" font-style="italic" font-family="Liberation Serif" fill="#444">x</text>
<path d="M658.5,565 h14 v8 h-14 Z" fill="#fff" stroke="#777" stroke-width="0.8"/>
<rect x="659" y="567.5" width="9" height="5" fill="#c5d9f1"/>
<path d="M658.5,567.5 h14 M658.5,570.2 h14 M662,565 v8 M665.5,565 v8 M669,565 v8" fill="none" stroke="#999" stroke-width="0.6"/>
<path d="M665,559 h6.5 a1.5,1.5 0 0 1 1.5,1.5 v3.5 a1.5,1.5 0 0 1 -1.5,1.5 h-6.5 l-2,-3.2 Z" fill="#fff" stroke="#666" stroke-width="0.8"/>
<circle cx="666" cy="562.2" r="0.7" fill="#555"/>
<rect x="0" y="0" width="2" height="653" fill="#000"/>
</svg>
</body></html>
